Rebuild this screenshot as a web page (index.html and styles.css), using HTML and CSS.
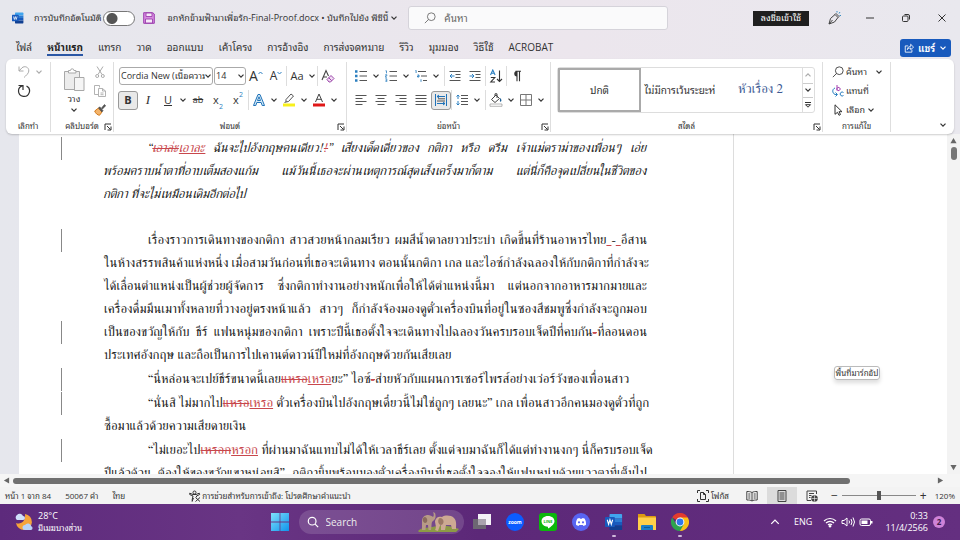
FILE: index.html
```html
<!DOCTYPE html>
<html lang="th">
<head>
<meta charset="utf-8">
<title>อกหักข้ามฟ้ามาเพื่อรัก-Final-Proof.docx</title>
<meta name="viewport" content="width=device-width, initial-scale=1">
<link rel="stylesheet" href="styles.css">
</head>
<body>
<svg class="defs" aria-hidden="true">
  <symbol id="chev" viewBox="0 0 8 8"><path d="M1.5 2.7 4 5.2 6.5 2.7" fill="none" stroke="currentColor" stroke-width="1.2"/></symbol>
  <symbol id="launch" viewBox="0 0 8 8"><path d="M1 7V1h6M3 3l3.5 3.5M7 3.500V7H3.500" fill="none" stroke="#333" stroke-width="1"/></symbol>
  <symbol id="word" viewBox="0 0 20 20"><path fill="#41a5ee" d="M6 1h12a1 1 0 0 1 1 1v4H5V2a1 1 0 0 1 1-1z"/><path fill="#2b7cd3" d="M5 6h14v4H5z"/><path fill="#185abd" d="M5 10h14v4H5z"/><path fill="#103f91" d="M5 14h14v4a1 1 0 0 1-1 1H6a1 1 0 0 1-1-1z"/><rect y="4.500" width="11" height="11" rx="1" fill="#185abd"/><path d="m2.500 7.500 1.500 5 1.500-5 1.500 5 1.500-5" fill="none" stroke="#fff" stroke-width="1.200"/></symbol>
  <symbol id="lens" viewBox="0 0 14 14"><circle cx="8.500" cy="5.500" r="4.500" fill="none" stroke="currentColor"/><path d="M5.300 8.700 1 13" stroke="currentColor"/></symbol>
</svg>

<header class="titlebar">
  <svg class="i12"><use href="#word"/></svg>
  <label class="autosave">การบันทึกอัตโนมัติ <input type="checkbox" role="switch"></label>
  <button class="save" aria-label="บันทึก"><svg viewBox="0 0 12 12" class="i12"><path d="M.7.7h9L11.300 2v9.300H.7z" fill="#d78be0" stroke="#9c3fae"/><path d="M3 1v3.500h6V1zM2.500 11V7h7v4z" fill="#f6e8f8" stroke="#9c3fae" stroke-width=".9"/></svg></button>
  <button class="docname">อกหักข้ามฟ้ามาเพื่อรัก-Final-Proof.docx • บันทึกไปยัง พีซีนี้ <svg class="i8"><use href="#chev"/></svg></button>
  <label class="search"><svg class="i12"><use href="#lens"/></svg><input type="search" placeholder="ค้นหา" aria-label="ค้นหา"></label>
  <button class="signin">ลงชื่อเข้าใช้</button>
  <div class="winctl">
    <button aria-label="ปากกา"><svg viewBox="0 0 14 14" class="i14"><path d="M2 13 3.500 7.500 8 3.500l3 3L7.500 11zM2 13l3.500-4M8 3.500l1-1 3 3-1 1" fill="none" stroke="#444"/><path d="M10 1.500V0M12 2.500 13 1M12.500 4.500H14" stroke="#3a8fc4"/></svg></button>
    <button aria-label="ย่อ"><svg viewBox="0 0 10 10" class="i10"><path d="M1 5h8" stroke="#333"/></svg></button>
    <button aria-label="คืนค่า"><svg viewBox="0 0 10 10" class="i10"><rect x="1.500" y="3" width="5.500" height="5.500" rx="1" fill="none" stroke="#333"/><path d="M3.500 1.500h3.500a1.500 1.500 0 0 1 1.500 1.500v3.500" fill="none" stroke="#333"/></svg></button>
    <button aria-label="ปิด"><svg viewBox="0 0 10 10" class="i10"><path d="m1.500 1.500 7 7m0-7-7 7" stroke="#333"/></svg></button>
  </div>
</header>

<nav class="tabs">
  <a href="#">ไฟล์</a><a href="#" class="on">หน้าแรก</a><a href="#">แทรก</a><a href="#">วาด</a><a href="#">ออกแบบ</a><a href="#">เค้าโครง</a><a href="#">การอ้างอิง</a><a href="#">การส่งจดหมาย</a><a href="#">รีวิว</a><a href="#">มุมมอง</a><a href="#">วิธีใช้</a><a href="#">ACROBAT</a>
  <button class="share"><svg viewBox="0 0 12 12" class="i10"><path d="M5 3.500H1.500v7.500h8V8M4 8c.3-3 2-4 4-4V1.500L11.500 5 8 8V6C6 6 5 6.500 4 8z" fill="none" stroke="#fff"/></svg>แชร์ <svg class="i8"><use href="#chev"/></svg></button>
</nav>

<section class="ribbon">
  <div class="group undo">
    <div class="stack">
      <div class="row"><button aria-label="เลิกทำ" class="dim"><svg viewBox="0 0 14 14" class="i14"><path d="M2 1.500V6h4.500M2 6l3-3.200C7.500.5 12 2 11.800 6 11.700 8.500 9 10.500 7 12.500" fill="none" stroke="currentColor"/></svg></button><button class="c dim" aria-label="เพิ่มเติม"><svg class="i8"><use href="#chev"/></svg></button></div>
      <div class="row"><button aria-label="ทำซ้ำ"><svg viewBox="0 0 14 14" class="i14"><path d="M1.500 1.500H6V6M5.800 1.700C3 2.500 1.500 4.700 1.500 7a5.500 5.500 0 1 0 8-5" fill="none" stroke="#333" stroke-width="1.200"/></svg></button></div>
    </div>
    <footer>เลิกทำ</footer>
  </div>

  <div class="group clip">
    <div class="cols">
      <button class="paste"><svg viewBox="0 0 22 24"><path d="M1.500 3.500h15v18h-15z" fill="#ececec" stroke="#a8a8a8"/><path d="M5.500 5V2.500h2a1.700 1.700 0 0 1 3.400 0h2V5z" fill="#fff" stroke="#a8a8a8"/><path d="M11.500 9.500h9.500v13h-9.500z" fill="#f5f5f5" stroke="#a8a8a8"/></svg>วาง<svg class="i8"><use href="#chev"/></svg></button>
      <div class="stack">
        <button aria-label="ตัด" class="dim"><svg viewBox="0 0 12 12" class="i12"><path d="m3 .5 5 8M9 .5l-5 8" stroke="currentColor"/><circle cx="3.200" cy="10" r="1.500" fill="none" stroke="currentColor"/><circle cx="8.800" cy="10" r="1.500" fill="none" stroke="currentColor"/></svg></button>
        <button aria-label="คัดลอก" class="dim"><svg viewBox="0 0 12 12" class="i12"><path d="M4.500 9.500h-4v-9h5v2M4.500 3.500h4L11.500 6v5.500h-7zM8.500 3.500V6h3M6.500 8h3M6.500 9.700h3" fill="none" stroke="currentColor" stroke-width=".9"/></svg></button>
        <button aria-label="ตัวคัดวางรูปแบบ"><svg viewBox="0 0 12 12" class="i12"><path d="M.7 7 4.500 4 8 8l-2.500 3.300C3.500 11 1.500 9.500.7 7z" fill="#f3b36a" stroke="#d27a1c"/><path d="m4.500 4 1.200-1.200L9 6.500 8 8zM7.500 4l3-3.500 1.200 1.200-3.200 3.300z" fill="#555" stroke="#444" stroke-width=".6"/></svg></button>
      </div>
    </div>
    <footer>คลิปบอร์ด<button class="launch" aria-label="ตัวเลือก"><svg class="i8"><use href="#launch"/></svg></button></footer>
  </div>

  <div class="group font">
    <div class="row">
      <label class="combo wide"><select aria-label="ฟอนต์"><option>Cordia New (เนื้อความ</option></select><svg class="i8"><use href="#chev"/></svg></label>
      <label class="combo"><select aria-label="ขนาด"><option>14</option></select><svg class="i8"><use href="#chev"/></svg></label>
      <button class="big" aria-label="ขยายฟอนต์">A<svg viewBox="0 0 5 12"><path d="m.5 4 2-2 2 2" fill="none" stroke="#2b7fc0"/></svg></button>
      <button class="mid" aria-label="ลดฟอนต์">A<svg viewBox="0 0 5 12"><path d="m.5 2 2 2 2-2" fill="none" stroke="#2b7fc0"/></svg></button>
      <i class="sep"></i>
      <button class="aa">Aa</button><button class="c" aria-label="เพิ่มเติม"><svg class="i8"><use href="#chev"/></svg></button>
      <i class="sep"></i>
      <button class="big" aria-label="ล้างการจัดรูปแบบ"><svg viewBox="0 0 14 14" class="i14"><path d="M1 11 5 1.500 7.500 7M2.500 8H6" fill="none" stroke="#444" stroke-width="1.100"/><path d="m6 10.500 4-4 3 3-3.500 3.500H8zM7.700 8.700l3 3" fill="#f1dcf4" stroke="#9a45a8"/></svg></button>
    </div>
    <div class="row">
      <button class="sel"><b>B</b></button><button class="serif"><em>I</em></button><button><u>U</u></button><button class="c" aria-label="เพิ่มเติม"><svg class="i8"><use href="#chev"/></svg></button>
      <button class="strike"><s>ab</s></button><button class="script">x<sub>2</sub></button><button class="script">x<sup>2</sup></button>
      <i class="sep"></i>
      <button aria-label="เอฟเฟ็กต์ข้อความ"><svg viewBox="0 0 14 14" class="i14"><path d="M1.500 12.500 6 1.500h2l4.500 11h-2.300L9.200 9.500H4.800l-1 3zM5.500 7.500h3L7 3.800z" fill="#d8ecf9" stroke="#1f72b8"/></svg></button><button class="c" aria-label="เพิ่มเติม"><svg class="i8"><use href="#chev"/></svg></button>
      <button aria-label="สีเน้นข้อความ"><svg viewBox="0 0 14 14" class="i14"><path d="M4 9V6.500L9 1l2.500 2-5 5.500zM4 9l-1.500.5" fill="none" stroke="#555"/><path d="M1 10.500h12v3H1z" fill="#f8f01c"/></svg></button><button class="c" aria-label="เพิ่มเติม"><svg class="i8"><use href="#chev"/></svg></button>
      <button aria-label="สีฟอนต์"><svg viewBox="0 0 14 14" class="i14"><path d="m3.500 9 3.500-8 3.500 8M4.700 6.300h4.600" fill="none" stroke="#444"/><path d="M1 10.500h12v3H1z" fill="#e01818"/></svg></button><button class="c" aria-label="เพิ่มเติม"><svg class="i8"><use href="#chev"/></svg></button>
    </div>
    <footer>ฟอนต์<button class="launch" aria-label="ตัวเลือก"><svg class="i8"><use href="#launch"/></svg></button></footer>
  </div>

  <div class="group para">
    <div class="row">
      <button aria-label="สัญลักษณ์"><svg viewBox="0 0 12 12" class="i12"><path d="M4.500 1.500H12M4.500 6H12M4.500 10.500H12" stroke="#555"/><path d="M0 .3h2.500v2.500H0zM0 4.700h2.500v2.500H0zM0 9.200h2.500v2.500H0z" fill="#2b7fc0"/></svg></button><button class="c" aria-label="เพิ่มเติม"><svg class="i8"><use href="#chev"/></svg></button>
      <button aria-label="ลำดับเลข"><svg viewBox="0 0 12 12" class="i12"><path d="M4.500 1.500H12M4.500 6H12M4.500 10.500H12" stroke="#555"/><path d="M.5.8h1v2.500M.3 4.700h1.500v1.200H.3v1.300h1.700M.3 8.800h1.500v3H.3M.5 10.300h1.300" fill="none" stroke="#2b7fc0" stroke-width=".8"/></svg></button><button class="c" aria-label="เพิ่มเติม"><svg class="i8"><use href="#chev"/></svg></button>
      <button aria-label="รายการหลายระดับ"><svg viewBox="0 0 12 12" class="i12"><path d="M3 1.500h8M6 6h6M8 10.500h4" stroke="#555"/><path d="M.5.300h.6V3M2.500 5h1.500v2H2.500v-1h1.500M6 9.300v2.500" fill="none" stroke="#2b7fc0" stroke-width=".9"/></svg></button><button class="c" aria-label="เพิ่มเติม"><svg class="i8"><use href="#chev"/></svg></button>
      <i class="sep wide"></i>
      <button aria-label="ลดการเยื้อง"><svg viewBox="0 0 12 12" class="i12"><path d="M.5 1.500h11M6.500 4.500h5M6.500 7.500h5M.5 10.500h11" stroke="#555"/><path d="M5.500 6H1m2-2L1 6l2 2" fill="none" stroke="#2b7fc0"/></svg></button><button aria-label="เพิ่มการเยื้อง"><svg viewBox="0 0 12 12" class="i12"><path d="M.5 1.500h11M6.500 4.500h5M6.500 7.500h5M.5 10.500h11" stroke="#555"/><path d="M.5 6H5M3 4l2 2-2 2" fill="none" stroke="#2b7fc0"/></svg></button>
      <i class="sep"></i>
      <button aria-label="เรียงลำดับ"><svg viewBox="0 0 14 14" class="i14"><path d="m1.500 6 2.300-5 2.300 5M2.400 4.300h2.800" fill="none" stroke="#2b7fc0" stroke-width="1.100"/><path d="M1.800 8.500h4l-4 4.500h4.200M10.500 1.500v11M8 10l2.500 2.500L13 10" fill="none" stroke="#333" stroke-width="1.100"/></svg></button>
      <i class="sep"></i>
      <button aria-label="แสดงเครื่องหมาย"><svg viewBox="0 0 12 12" class="i12"><path d="M6 1.200v10M8.500 1.200v10M4.500 1.200H10" stroke="#333" stroke-width="1.100"/><path d="M6 1a2.700 2.700 0 0 0 0 5.500z" fill="#333"/></svg></button>
    </div>
    <div class="row">
      <button aria-label="ชิดซ้าย"><svg viewBox="0 0 12 12" class="i12"><path d="M.5 1.500h11M.5 4.500h7M.5 7.500h11M.5 10.500h7" stroke="#555"/></svg></button><button aria-label="กึ่งกลาง"><svg viewBox="0 0 12 12" class="i12"><path d="M.5 1.500h11M2.500 4.500h7M.5 7.500h11M2.500 10.500h7" stroke="#555"/></svg></button><button aria-label="ชิดขวา"><svg viewBox="0 0 12 12" class="i12"><path d="M.5 1.500h11M4.500 4.500h7M.5 7.500h11M4.500 10.500h7" stroke="#555"/></svg></button><button aria-label="เต็มแนว"><svg viewBox="0 0 12 12" class="i12"><path d="M.5 1.500h11M.5 4.500h11M.5 7.500h11M.5 10.500h11" stroke="#555"/></svg></button><button class="sel" aria-label="กระจายแบบไทย"><svg viewBox="0 0 12 12" class="i12"><path d="M.5 0v12M11.500 0v12M2 2.500h8m-6-1.500L2 2.500 4 4M2 9.500h8M8 8l2 1.500L8 11" fill="none" stroke="#1f72b8"/><path d="M3 4.800h7M2 7h8" stroke="#555"/></svg></button>
      <i class="sep"></i>
      <button aria-label="ระยะห่างบรรทัด"><svg viewBox="0 0 12 12" class="i12"><path d="M5 1.500h7M5 4.500h7M5 7.500h7M5 10.500h7" stroke="#555"/><path d="M2 1v4M.5 2.500 2 1l1.500 1.500M2 7v4M.5 9.500 2 11l1.500-1.500" fill="none" stroke="#2b7fc0"/></svg></button><button class="c" aria-label="เพิ่มเติม"><svg class="i8"><use href="#chev"/></svg></button>
      <i class="sep wide"></i>
      <button aria-label="การแรเงา"><svg viewBox="0 0 14 14" class="i14"><path d="M2.500 6.500 7 2l3.500 3.500-4.500 4zM6 3V.8h2V5" fill="none" stroke="#444"/><path d="M11 5c2 1.500 1.500 3 1 3.500s-1.500 0-1-1.500z" fill="#1d5f95"/><path d="M1 11h12v2.300H1z" fill="#fff" stroke="#999" stroke-width=".7"/></svg></button><button class="c" aria-label="เพิ่มเติม"><svg class="i8"><use href="#chev"/></svg></button>
      <button aria-label="เส้นขอบ"><svg viewBox="0 0 12 12" class="i12"><path d="M.5.5h11v11H.5zM6 .5v11M.5 6h11" fill="none" stroke="#777"/></svg></button><button class="c" aria-label="เพิ่มเติม"><svg class="i8"><use href="#chev"/></svg></button>
    </div>
    <footer>ย่อหน้า<button class="launch" aria-label="ตัวเลือก"><svg class="i8"><use href="#launch"/></svg></button></footer>
  </div>

  <div class="group styles">
    <div class="gallery">
      <button class="on">ปกติ</button><button>ไม่มีการเว้นระยะห่</button><button class="h2">หัวเรื่อง 2</button>
      <div class="scroller"><button class="dim" aria-label="ขึ้น"><svg class="i8 flip"><use href="#chev"/></svg></button><button aria-label="ลง"><svg class="i8"><use href="#chev"/></svg></button><button aria-label="ทั้งหมด"><svg viewBox="0 0 8 8" class="i8"><path d="M1 1.500h6M1.500 3.700 4 6.200l2.500-2.500z" fill="none" stroke="#333"/></svg></button></div>
    </div>
    <footer>สไตล์<button class="launch" aria-label="ตัวเลือก"><svg class="i8"><use href="#launch"/></svg></button></footer>
  </div>

  <div class="group edit">
    <div class="stack">
      <button><svg class="i12"><use href="#lens"/></svg>ค้นหา <svg class="i8 far"><use href="#chev"/></svg></button>
      <button><svg viewBox="0 0 12 12" class="i12"><path d="M5 0v5.500M5 3.500a1.600 1.600 0 1 1 0 1z" fill="none" stroke="#a23fb0"/><path d="M11.500 7.500a2 2 0 1 0 0 3M3 3C0 4 0 8 3 9.500h2M3.500 7.500l2 2-2 2" fill="none" stroke="#2b7fc0"/></svg>แทนที่</button>
      <button><svg viewBox="0 0 12 12" class="i12"><path d="M3 .8v9.500l2.500-2 1.500 3 1.500-.8L7 7.700h3z" fill="none" stroke="#333"/></svg>เลือก <svg class="i8"><use href="#chev"/></svg></button>
    </div>
    <footer>การแก้ไข</footer>
  </div>
  <button class="collapse" aria-label="ยุบ"><svg class="i8"><use href="#chev"/></svg></button>
</section>

<main>
  <div class="doc">
    <article class="page">
      <div class="p it">
        <div class="l first mark">“<del>เอาล่ะ</del><ins>เอาละ</ins> ฉันจะไปอังกฤษคนเดียว!<del>!</del>” เสียงเด็ดเดี่ยวของ กติกา หรือ ดรีม เจ้าแม่ดราม่าของเพื่อนๆ เอ่ย</div>
        <div class="l">พร้อมคราบน้ำตาที่อาบเต็มสองแก้ม แม้วันนี้เธอจะผ่านเหตุการณ์สุดเส็งเคร็งมาก็ตาม แต่นี่ก็คือจุดเปลี่ยนในชีวิตของ</div>
        <div class="l end">กติกา ที่จะไม่เหมือนเดิมอีกต่อไป</div>
      </div>
      <div class="p">
        <div class="l first mark">เรื่องราวการเดินทางของกติกา สาวสวยหน้ากลมเรียว ผมสีน้ำตาลยาวประบ่า เกิดขึ้นที่ร้านอาหารไทย<ins> </ins>-<ins> </ins>อีสาน</div>
        <div class="l">ในห้างสรรพสินค้าแห่งหนึ่ง เมื่อสามวันก่อนที่เธอจะเดินทาง ตอนนั้นกติกา เกล และไอซ์กำลังฉลองให้กับกติกาที่กำลังจะ</div>
        <div class="l">ได้เลื่อนตำแหน่งเป็นผู้ช่วยผู้จัดการ ซึ่งกติกาทำงานอย่างหนักเพื่อให้ได้ตำแหน่งนี้มา แต่นอกจากอาหารมากมายและ</div>
        <div class="l">เครื่องดื่มมึนเมาทั้งหลายที่วางอยู่ตรงหน้าแล้ว สาวๆ ก็กำลังจ้องมองดูตั๋วเครื่องบินที่อยู่ในซองสีชมพูซึ่งกำลังจะถูกมอบ</div>
        <div class="l mark">เป็นของขวัญให้กับ ธีร์ แฟนหนุ่มของกติกา เพราะปีนี้เธอตั้งใจจะเดินทางไปฉลองวันครบรอบเจ็ดปีที่คบกัน<del>-</del>ที่ลอนดอน</div>
        <div class="l end">ประเทศอังกฤษ และถือเป็นการไปเคานต์ดาวน์ปีใหม่ที่อังกฤษด้วยกันเสียเลย</div>
      </div>
      <div class="p">
        <div class="l first end mark">“นี่หล่อนจะเปย์ธีร์ขนาดนี้เลย<del>แหรอ</del><ins>เหรอ</ins>ยะ” ไอซ์<del>-</del>ส่ายหัวกับแผนการเซอร์ไพรส์อย่างเว่อร์วังของเพื่อนสาว</div>
      </div>
      <div class="p">
        <div class="l first mark">“นั่นสิ ไม่มากไป<del>แหรอ</del><ins>เหรอ</ins> ตั๋วเครื่องบินไปอังกฤษเดี๋ยวนี้ไม่ใช่ถูกๆ เลยนะ” เกล เพื่อนสาวอีกคนมองดูตั๋วที่ถูก</div>
        <div class="l end">ซื้อมาแล้วด้วยความเสียดายเงิน</div>
      </div>
      <div class="p">
        <div class="l first mark">“ไม่เยอะไป<del>เหรอก</del><ins>หรอก</ins> ที่ผ่านมาฉันแทบไม่ได้ให้เวลาธีร์เลย ตั้งแต่จบมาฉันก็ได้แต่ทำงานงกๆ นี่ก็ครบรอบเจ็ด</div>
        <div class="l">ปีแล้วด้วย ต้องให้ของขวัญเขาหน่อยสิ” กติกายิ้มพร้อมมองตั๋วเครื่องบินที่เธอตั้งใจจองให้แฟนหนุ่มด้วยแววตาที่เต็มไป</div>
      </div>
    </article>
    <aside class="markup"><span>พื้นที่มาร์กอัป</span></aside>
    <div class="vbar"><svg viewBox="0 0 8 8"><path d="M4 1 7.500 7h-7z" fill="#666"/></svg><i></i><svg viewBox="0 0 8 8"><path d="M4 7 .5 1h7z" fill="#666"/></svg></div>
  </div>
  <div class="hbar"><svg viewBox="0 0 8 8"><path d="M1 4 7 .5v7z" fill="#666"/></svg><i></i><svg viewBox="0 0 8 8"><path d="M7 4 1 .5v7z" fill="#666"/></svg></div>
</main>

<div class="status">
  <span>หน้า 1 จาก 84</span><span>50067 คำ</span><span>ไทย</span>
  <button class="acc"><svg viewBox="0 0 12 12" class="i12"><path d="M4 2.500a1.500 1.500 0 1 1 3 0 1.500 1.500 0 0 1-3 0zM.7 3.200 4 4.500h3L10.300 3.200l.4 1.300L7.500 6v1.200M4 11 3 10.500 4 6 .7 4.500V3.200M4.500 8 3 11.500" fill="none" stroke="#333"/><path d="m6.500 7.500 4.500 4m0-4-4.500 4" stroke="#333"/></svg>การช่วยสำหรับการเข้าถึง: โปรดศึกษาคำแนะนำ</button>
  <button class="focus"><svg viewBox="0 0 12 12" class="i12"><path d="M.5 3V.5H3M9 .5h2.500V3M11.500 9v2.500H9M3 11.500H.5V9M3.500 2.500h3l2 2v5h-5zM6.500 2.500v2h2" fill="none" stroke="#333"/></svg>โฟกัส</button>
  <div class="views">
    <button aria-label="อ่าน"><svg viewBox="0 0 12 12" class="i12"><path d="M6 2.500C4.500 1.500 2.500 1.500.8 1.500v8.500c2 0 4 0 5.200 1 1.200-1 3.200-1 5.200-1V1.500c-1.700 0-3.700 0-5.200 1zM6 2.500V11M2.300 4h2M2.300 6h2M2.300 8h2M7.700 4h2M7.700 6h2M7.700 8h2" fill="none" stroke="#444"/></svg></button>
    <button class="on" aria-label="เค้าโครงเหมือนพิมพ์"><svg viewBox="0 0 12 12" class="i12"><path d="M2 .5h8v11H2zM3.500 3h5M3.500 5h5M3.500 7h5M3.500 9h5" fill="none" stroke="#444"/></svg></button>
    <button aria-label="เว็บ"><svg viewBox="0 0 12 12" class="i12"><path d="M5 10.500H1V1h9.500v3M3 3.500h5M3 5.500h2.500M3 7.500h1.500" fill="none" stroke="#444"/><circle cx="8.500" cy="8.500" r="3.300" fill="#444"/><path d="M8.500 5.500v6M5.500 8.500h6" stroke="#f3f3f3" stroke-width=".6"/></svg></button>
  </div>
  <div class="zoom"><button>−</button><input type="range" value="51" aria-label="ย่อ/ขยาย"><button>+</button><output>120%</output></div>
</div>

<div class="taskbar">
  <div class="weather">
    <svg viewBox="0 0 20 20"><path d="M11 2a8 8 0 1 1-9 9c5 2 10-2 9-9z" fill="#f6a43a"/><path d="M3 8a3 3 0 0 1 0-5 3.500 3.500 0 0 1 6 1 2 2 0 0 1 0 4z" fill="#cfe0fa"/><path d="M11 18a2.500 2.500 0 0 1 0-5 3.500 3.500 0 0 1 6.300 1.200A2 2 0 0 1 17 18z" fill="#b9d3f8"/></svg>
    <p>28°C<small>มีเมฆบางส่วน</small></p>
  </div>
  <div class="apps">
    <button aria-label="เริ่ม"><svg viewBox="0 0 18 18"><linearGradient id="wn" x2="1" y2="1"><stop stop-color="#7fe0fb"/><stop offset="1" stop-color="#0f93ec"/></linearGradient><path fill="url(#wn)" d="M0 0h8.600v8.600H0zM9.400 0H18v8.600H9.400zM0 9.400h8.600V18H0zM9.400 9.400H18V18H9.400z"/></svg></button>
    <label class="find"><svg viewBox="0 0 14 14" class="i12"><circle cx="6" cy="6" r="4.500" fill="none" stroke="#fff" stroke-width="1.400"/><path d="m9.500 9.500 3.500 3.500" stroke="#fff" stroke-width="1.500"/></svg><input type="search" placeholder="Search" aria-label="Search">
      <svg class="eleph" viewBox="0 0 42 22"><path d="M0 20c4-4 9-3 14-4 8-2 18-2 27 2l-3 3H1z" fill="#8d9a45"/><path d="M4 19V10c0-4 3-6 6-6 2 0 4 1 5 2 1-1 1-3 0-5l2 1c1 3 1 6-2 8-2 1-1 4-2 9h-2.500l-.5-5-2 0-.500 5z" fill="#b79a86"/><path d="M7 6c-3 0-3 5 0 6 3 0 3-5 0-6z" fill="#8a6b5d"/><path d="M17 19c2-3 0-6 0-9 1-4 4-5 7-4 3-2 9-2 12 1 3 3 2 8 2 11h-4l-1-4h-5l-1 5h-4v-5c-2 1-2 4-3 6z" fill="#cda993"/><path d="M22 7c4 0 5 6 1 7-3 0-4-6-1-7z" fill="#9c7766"/></svg></label>
    <button aria-label="มุมมองงาน"><svg viewBox="0 0 18 18"><path d="M5 1h13v11H5z" fill="#f4f1f6"/><path d="M0 6h13v10H0z" fill="#6d6773"/><path d="M5 6h8v6H5z" fill="#aaa3ae"/></svg></button>
    <button aria-label="Zoom"><svg viewBox="0 0 18 18"><circle cx="9" cy="9" r="9" fill="#0b5cff"/><text x="9" y="10.700" text-anchor="middle" class="zt">zoom</text></svg></button>
    <button aria-label="LINE"><svg viewBox="0 0 18 18"><rect width="18" height="18" rx="3" fill="#0bb80b"/><path d="M9 3c4 0 6.500 2.300 6.500 5.200 0 3-3.500 5.300-6 7.100-.8.500-.4-1-.6-1.600C5 13.500 2.500 11 2.500 8.200 2.500 5.300 5 3 9 3z" fill="#fff"/><text x="9" y="9.800" text-anchor="middle" class="lt">LINE</text></svg></button>
    <button aria-label="Discord"><svg viewBox="0 0 18 18"><circle cx="9" cy="9" r="9" fill="#5865f2"/><path d="M5.500 5.500 7.500 5l.5.800h2l.5-.8 2 .5c1.300 2 1.700 4 1.500 6.300-1 .8-1.800 1-2.500 1.200l-.7-1.100H7.200L6.500 13c-.7-.2-1.500-.4-2.500-1.200-.2-2.300.2-4.300 1.500-6.300z" fill="#fff"/><circle cx="7" cy="9.300" r="1.100" fill="#5865f2"/><circle cx="11" cy="9.300" r="1.100" fill="#5865f2"/></svg></button>
    <button aria-label="Word" class="run"><svg><use href="#word"/></svg></button>
    <button aria-label="File Explorer"><svg viewBox="0 0 18 18"><path d="M0 1h6.500L8 3h9a1 1 0 0 1 1 1v3H0z" fill="#dd9a12"/><path d="M0 4.500h18V17H0z" fill="#ffd04a"/><path d="M3 17v-4a1 1 0 0 1 1-1h10a1 1 0 0 1 1 1v4z" fill="#1a7fc8"/><path d="M6 14.500h6" stroke="#0d5c9c"/></svg></button>
    <button aria-label="Chrome" class="run"><svg viewBox="0 0 18 18"><path d="M9 9 1.200 4.500a9 9 0 0 1 15.600 0z" fill="#e33b2e"/><path d="M9 9V4.500h7.800A9 9 0 0 1 9 18z" fill="#fbc116"/><path d="m5.100 11.200-3.900-6.700A9 9 0 0 0 9 18l3.900-6.800z" fill="#2da44e"/><circle cx="9" cy="9" r="4.400" fill="#fff"/><circle cx="9" cy="9" r="3.400" fill="#2f78ea"/></svg></button>
  </div>
  <div class="tray">
    <button aria-label="ไอคอนที่ซ่อน"><svg viewBox="0 0 8 8" class="i10"><path d="M1 5.500 4 2.500l3 3" fill="none" stroke="#fff"/></svg></button>
    <span>ENG</span>
    <div class="net">
      <svg viewBox="0 0 14 12"><path d="M1 5a8.500 8.500 0 0 1 12 0M3 7a5.600 5.600 0 0 1 8 0M5 9a2.800 2.800 0 0 1 4 0" fill="none" stroke="#fff" stroke-width="1.200"/><circle cx="7" cy="10.300" r="1.200" fill="#fff"/></svg>
      <svg viewBox="0 0 14 12"><path d="M1 4.500h2L6 2v8L3 7.500H1zM8 4.500q1 1.500 0 3M10 3q2 3 0 6M12 1.500q3 4.500 0 9" fill="none" stroke="#fff"/></svg>
      <svg viewBox="0 0 14 12"><rect x="1" y="3" width="10.500" height="6.500" rx="1.500" fill="none" stroke="#fff"/><path d="M2.500 4.500h6V8h-6zM12 5h1.500v2.500H12z" fill="#fff"/></svg>
    </div>
    <time><span>0:33</span><span>11/4/2566</span></time>
    <b class="badge">2</b>
  </div>
</div>
</body>
</html>
```
FILE: styles.css
```css
* { box-sizing: border-box; }
body {
  margin: 0;
  height: 100vh;
  display: flex;
  flex-direction: column;
  overflow: hidden;
  background: linear-gradient(90deg, #e6e7ed, #ece6ed 60%, #e9e8ee);
  font: 9px/14px "Open Sans", "Noto Sans Thai Looped", "Noto Sans", sans-serif;
  color: #333;
}
button, input, select { font: inherit; color: inherit; border: 0; padding: 0; margin: 0; background: none; }
button { display: flex; align-items: center; justify-content: center; white-space: nowrap; }
a { color: inherit; text-decoration: none; }
svg { flex: none; display: block; }
.defs { position: absolute; width: 0; height: 0; }
.i8 { width: 8px; height: 8px; }
.i10 { width: 10px; height: 10px; }
.i12 { width: 12px; height: 12px; }
.i14 { width: 14px; height: 14px; }
.dim { color: #aaa; }
.flip { transform: rotate(180deg); }

.titlebar { flex: none; height: 36px; display: flex; align-items: center; padding: 0 0 0 12px; }
.autosave { display: flex; align-items: center; gap: 1px; margin-left: 10px; white-space: nowrap; }
.autosave input { appearance: none; width: 32px; height: 15px; border: 1px solid #777; border-radius: 8px; background: radial-gradient(circle at 8px 50%, #555 5px, #fff 6px); }
.save { margin-left: 8px; }
.docname { gap: 2px; margin-left: 13px; }
.search { width: 260px; height: 24px; display: flex; align-items: center; gap: 8px; margin-left: 10px; padding: 0 15px; background: #fafafb; border: 1px solid #d5d3da; border-radius: 3px; color: #666; font-size: 10px; }
.search input { flex: 1; min-width: 0; outline: 0; }
.search input::placeholder { color: #666; }
.signin { margin-left: auto; width: 56px; height: 15px; background: #1f1f1f; color: #fff; }
.winctl { display: flex; margin-left: 7px; }
.winctl button { width: 36px; height: 24px; }

.tabs { flex: none; height: 23px; display: flex; align-items: center; gap: 15px; padding: 0 9px 0 16px; font-size: 10px; }
.tabs a { height: 17px; line-height: 17px; white-space: nowrap; }
.tabs .on { font-weight: 700; border-bottom: 2px solid #2b57a5; color: #222; }
.share { margin-left: auto; width: 51px; height: 18px; gap: 4px; border-radius: 3px; background: #185abd; color: #fff; font-weight: 600; }

.ribbon { flex: none; height: 75px; margin: 0 6px; display: flex; background: #fff; border-radius: 6px; box-shadow: 0 1px 2px #0003; position: relative; z-index: 1; }
.group { flex: none; display: flex; flex-direction: column; margin: 3px 0 2px; border-right: 1px solid #dedede; }
.group footer { margin-top: auto; height: 13px; font-size: 8px; line-height: 13px; text-align: center; position: relative; }
.launch { position: absolute; right: 1px; bottom: 1px; }
.row { display: flex; align-items: center; height: 24px; }
.row button { width: 20px; height: 19px; }
.row .c { width: 10px; }
.stack { display: flex; flex-direction: column; }
.sep { width: 1px; height: 20px; background: #ddd; }
.sep.wide { margin-left: 3px; }
.row .sel { border: 1px solid #999; border-radius: 3px; background: #e9e9e9; }
.undo { width: 45px; }
.undo .stack { padding-left: 8px; }
.undo .row { height: 19px; }
.clip { width: 63px; }
.cols { display: flex; padding-left: 8px; }
.paste { width: 30px; flex-direction: column; }
.paste > svg:first-child { width: 22px; height: 24px; }
.clip .stack button { width: 22px; height: 19px; }
.font { width: 233px; }
.font, .para { padding-top: 2px; }
.font .row, .para .row { padding-left: 4px; }
.combo { display: grid; width: 32px; height: 18px; margin-left: 1px; align-items: center; border: 1px solid #aaa; border-radius: 3px; }
.combo.wide { width: 94px; }
.combo select, .combo svg { grid-area: 1 / 1; }
.combo select { appearance: none; width: 100%; padding: 0 7px 0 1px; outline: 0; }
.combo svg { justify-self: end; }
.big { font-size: 14px; }
.mid { font-size: 12px; }
.big > svg:not(.i14), .mid > svg { width: 5px; height: 12px; }
.aa { font-size: 11px; }
.row .serif { font: 13px "Liberation Serif", serif; }
.row u, .row b { font-size: 11px; }
.script { font-size: 11px; }
.script sub, .script sup { font-size: 7px; line-height: 7px; color: #2b7fc0; }
.script sub { align-self: flex-end; }
.script sup { align-self: flex-start; }
.para { width: 204px; }
.styles { width: 272px; }
.gallery { display: grid; grid-template-columns: 83px 78px 83px 11px; height: 46px; margin: 5px 7px 0 6px; border: 1px solid #ddd; border-radius: 3px; }
.gallery > button { overflow: hidden; font-size: 10px; }
.gallery .on { border: 2px solid #aaa; }
.gallery .h2 { font: 13px "FreeSerif", serif; color: #3c5a94; }
.scroller { display: grid; grid-template-rows: repeat(3, 1fr); border-left: 1px solid #ddd; }
.scroller button + button { border-top: 1px solid #ccc; }
.edit { width: 68px; }
.edit .stack { padding-left: 9px; }
.edit .stack button { height: 19px; justify-content: flex-start; gap: 2px; }
.edit .far { margin-left: 6px; }
.collapse { margin: auto 7px 5px auto; }

main { flex: 1; min-height: 0; display: flex; flex-direction: column; }
.doc { flex: 1; min-height: 0; display: flex; overflow: hidden; padding-left: 19px; }
.page { width: 715px; background: #fff; border-right: 1px solid #ddd; padding: 3px 86px 0 42px; font: 13px/23px "FreeSerif", "Noto Serif Thai", serif; color: #222; }
.p { margin-bottom: 1px; }
.it { font-style: italic; margin-bottom: 23px; }
.l { height: 23px; padding-left: 42px; border-left: 1px solid transparent; white-space: nowrap; text-align-last: justify; }
.end { text-align-last: left; }
.first { text-indent: 44px; }
.mark { border-left-color: #888; }
ins, del { color: #c8474c; }
.markup { flex: 1; background: #fff; display: flex; align-items: flex-start; justify-content: center; padding: 232px 0 0 33px; }
.markup span { border: 1px solid #bbb; border-radius: 3px; padding: 0 1px; font-size: 8px; line-height: 12px; box-shadow: 0 3px 4px #0002; }
.vbar { width: 13px; background: #f3f3f3; display: flex; flex-direction: column; align-items: center; padding: 3px 0; }
.vbar svg, .hbar svg { width: 7px; height: 7px; }
.vbar i { width: 6px; height: 13px; margin: 3px 0 auto; border-radius: 3px; background: #777; }
.hbar { flex: none; height: 13px; display: flex; align-items: center; padding: 0 16px 0 3px; background: #f5f5f5; }
.hbar i { width: 89%; height: 6px; margin: 0 auto 0 3px; border-radius: 3px; background: #707070; }

.status { flex: none; height: 17px; display: flex; align-items: center; gap: 14px; padding: 0 5px; background: #f3f3f3; font-size: 8px; white-space: nowrap; }
.acc { gap: 1px; margin-left: 50px; }
.focus { gap: 2px; margin-left: auto; }
.views { display: flex; align-self: stretch; margin-left: -6px; }
.views button { width: 30px; }
.views .on { background: #dcdcdc; }
.zoom { display: flex; align-items: center; gap: 4px; margin-left: -10px; }
.zoom button { font-size: 12px; }
.zoom input { appearance: none; width: 74px; height: 12px; background: linear-gradient(#888, #888) center / 100% 1px no-repeat; }
.zoom input::-webkit-slider-thumb { appearance: none; width: 4px; height: 9px; background: #555; }
.zoom output { margin-left: 4px; }

.taskbar { flex: none; height: 36px; display: grid; grid-template-columns: 1fr auto 1fr; align-items: center; padding: 0 15px 0 14px; background: linear-gradient(90deg, #5d2a7c, #693584 25%, #5c2878 50%, #642f80); color: #fff; }
.weather { display: flex; align-items: center; gap: 4px; }
.weather svg { width: 20px; height: 20px; }
.weather p { margin: 0; line-height: 12px; }
.weather small { display: block; font-size: 8px; }
.apps { display: flex; align-items: center; gap: 15px; }
.apps button { width: 18px; height: 36px; position: relative; }
.apps button svg { width: 18px; height: 18px; }
.apps .run::after { content: ""; position: absolute; bottom: 3px; width: 4px; height: 2px; border-radius: 1px; background: #cfb8da; }
.find { display: flex; align-items: center; gap: 7px; width: 165px; height: 24px; margin: 0 -6px 0 -5px; padding: 0 4px 0 8px; border-radius: 12px; background: #ffffff24; }
.find input { flex: 1; min-width: 0; font-size: 10px; outline: 0; }
.find input::placeholder { color: #eee; }
.eleph { width: 42px; height: 22px; }
.zt { font: 700 5px "Open Sans", sans-serif; fill: #fff; }
.lt { font: 700 4px "Open Sans", sans-serif; fill: #0bb80b; }
.tray { display: flex; align-items: center; justify-content: flex-end; }
.tray > span { margin: 0 11px 0 14px; }
.net { display: flex; gap: 4px; margin-right: 12px; }
.net svg { width: 14px; height: 12px; }
.tray time { display: grid; text-align: right; line-height: 12px; }
.badge { width: 12px; height: 12px; margin-left: 5px; border-radius: 50%; background: #cf83d8; color: #3c1a4c; font-size: 8px; line-height: 12px; text-align: center; }
```
